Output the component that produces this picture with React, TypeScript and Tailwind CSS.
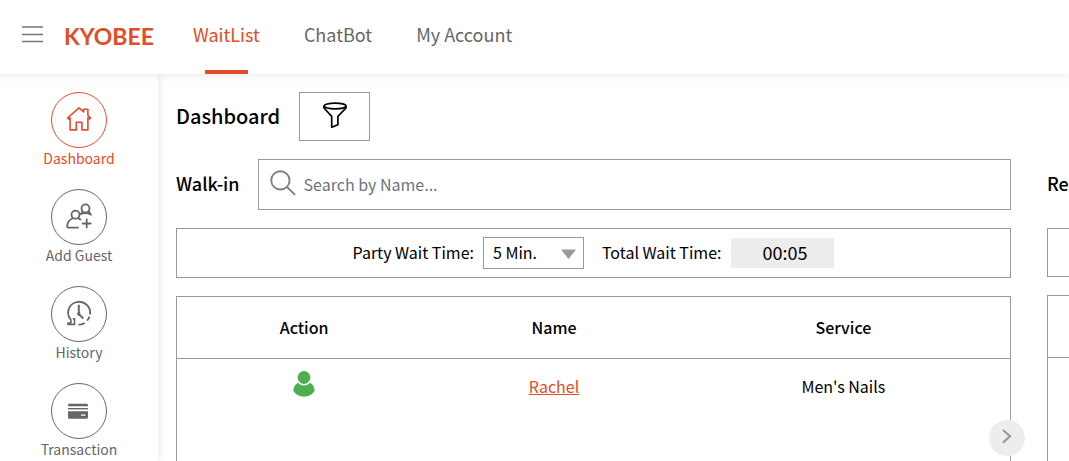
import type { ReactNode } from 'react';

const navLinks = [
  { label: 'WaitList', active: true },
  { label: 'ChatBot', active: false },
  { label: 'My Account', active: false },
];

function HomeIcon() {
  return (
    <svg className="w-7 h-7" viewBox="0 0 28 28" fill="none" stroke="currentColor" strokeWidth="1.6" strokeLinejoin="round" strokeLinecap="round">
      <path d="M2.500 12 14 1.800l4.700 4.100V3.200h4.200v6.300l2.600 2.500-1 1-1.600-1.100v12h-6v-7.600h-5.600v7.600H5.100V11.800L3.500 13z" />
    </svg>
  );
}

function AddGuestIcon() {
  return (
    <svg className="w-7 h-7" viewBox="0 0 28 28" fill="none" stroke="currentColor" strokeWidth="1.8" strokeLinecap="round">
      <circle cx="10.500" cy="11.700" r="4" />
      <path d="M13 24.600H3.200c-.7 0-1-.4-1-1 0-4 1.900-6.600 5.500-8.300M13.300 15.300c.9.300 1.500.7 2.100 1.200" />
      <circle cx="20.500" cy="5.400" r="4" />
      <path d="M17.700 8.400c-.8.500-1.300 1.200-1.700 2.400 2.600-.9 6-1 9.600.5-.4-1.300-1.200-2.300-2.300-2.900" />
      <path d="M21.700 16.500v8M17.700 20.500h8" />
    </svg>
  );
}

function HistoryIcon() {
  return (
    <svg className="w-7 h-7" viewBox="0 0 28 28" fill="none" stroke="currentColor" strokeWidth="1.8">
      <path d="M6 20.200A11 11 0 1 1 25 14.500" />
      <path d="M24.500 16.600a11 11 0 0 1-2.400 4M19.700 22.900a11 11 0 0 1-6.200 1.700" />
      <path d="M7.800 18.700h1.700v5.700H3v-1.300h2.300c.9-.6.900-1.900.4-3" strokeWidth="1.6" />
      <path d="M13.800 4.800v9.300l4.500 4.400" strokeWidth="2" />
      <circle cx="13.800" cy="14" r="1.700" fill="currentColor" stroke="none" />
    </svg>
  );
}

function CardIcon() {
  return (
    <svg className="w-7 h-7" viewBox="0 0 28 28" fill="currentColor">
      <path d="M3 9.300V8.200C3 7.300 3.600 6.700 4.500 6.700h17c.9 0 1.500.6 1.500 1.500v1.100z" />
      <path d="M3 11h20v1.400H3z" />
      <path fillRule="evenodd" d="M3 14.300h20v6c0 .9-.6 1.500-1.500 1.500h-17c-.9 0-1.500-.6-1.500-1.500zM16 17.600h4.500v1.100H16z" />
    </svg>
  );
}

const sidebarItems: { label: string; icon: ReactNode; active?: boolean }[] = [
  { label: 'Dashboard', icon: <HomeIcon />, active: true },
  { label: 'Add Guest', icon: <AddGuestIcon /> },
  { label: 'History', icon: <HistoryIcon /> },
  { label: 'Transaction', icon: <CardIcon /> },
];

const guests = [{ name: 'Rachel', service: "Men's Nails" }];

function Header() {
  return (
    <header className="relative z-10 flex h-[74px] shrink-0 items-center bg-white pl-[21px] shadow-[0_2px_8px_rgba(0,0,0,0.08)]">
      <button type="button" aria-label="Menu" className="mr-5 pb-1.5 text-[#777]">
        <svg className="h-5 w-[23px]" viewBox="0 0 23 20" stroke="currentColor" strokeWidth="1.6">
          <path d="M1 3h21M1 10.500h21M1 17.500h21" />
        </svg>
      </button>
      <a href="#" className="w-[129px] pb-0.5 font-['Lato'] text-[23px] leading-6 font-bold text-[#e44b28]">
        KYOBEE
      </a>
      <nav className="flex h-full gap-11 text-lg">
        {navLinks.map((link) => (
          <a
            key={link.label}
            href="#"
            className={`relative flex items-center pb-1.5 ${link.active ? 'text-[#e44b28]' : 'text-[#666]'}`}
          >
            {link.label}
            {link.active && <span className="absolute inset-x-3 bottom-0 h-1 bg-[#e44b28]" />}
          </a>
        ))}
      </nav>
    </header>
  );
}

function Sidebar() {
  return (
    <aside className="flex w-[158px] shrink-0 flex-col items-center gap-[21px] overflow-hidden pt-[18px] shadow-[2px_0_8px_rgba(0,0,0,0.08)]">
      {sidebarItems.map((item) => (
        <a
          key={item.label}
          href="#"
          className={`flex shrink-0 flex-col items-center ${item.active ? 'text-[#e44b28]' : 'text-[#666]'}`}
        >
          <span className="flex size-14 items-center justify-center rounded-full border border-current">
            {item.icon}
          </span>
          <span className="text-sm leading-5">{item.label}</span>
        </a>
      ))}
    </aside>
  );
}

function WalkIn() {
  return (
    <section className="flex w-[calc(100%-58px)] shrink-0 flex-col gap-[18px]">
      <div className="flex items-center gap-[18px]">
        <h2 className="pb-1 text-lg font-medium">Walk-in</h2>
        <label className="flex h-[51px] grow items-center gap-2 border border-[#999] pl-[11px]">
          <svg className="mb-1 size-[26px] text-[#808080]" viewBox="0 0 27 27" fill="none" stroke="currentColor" strokeWidth="2">
            <circle cx="10.800" cy="10.800" r="9.500" />
            <path d="m17.600 17.600 8.400 8.200" />
          </svg>
          <input
            type="text"
            aria-label="Search by Name"
            placeholder="Search by Name..."
            className="min-w-0 grow pb-0.5 text-base outline-none placeholder:text-[#6c757d]"
          />
        </label>
      </div>

      <div className="flex h-[50px] items-center justify-center border border-[#999]">
        <label htmlFor="party-wait" className="mr-[9px] pb-0.5">Party Wait Time:</label>
        <div className="relative mr-[18px]">
          <select id="party-wait" className="h-8 w-[101px] appearance-none border border-[#999] pb-0.5 pl-[9px]">
            <option>5 Min.</option>
          </select>
          <svg className="pointer-events-none absolute top-3 right-2 h-[10px] w-[15px]" viewBox="0 0 15 10" fill="#999">
            <path d="M0 .5h15L7.500 10z" />
          </svg>
        </div>
        <span className="mr-[10px] pb-0.5">Total Wait Time:</span>
        <output className="h-[30px] w-[103px] bg-[#ededed] pl-1 text-center text-lg leading-7">00:05</output>
      </div>

      <div className="grow border border-b-0 border-[#999]">
        <table className="w-full table-fixed text-center">
          <thead>
            <tr className="h-[61px] border-b border-[#999]">
              <th className="w-[31%] pr-1 font-medium">Action</th>
              <th className="w-[29%] pr-1 font-medium">Name</th>
              <th className="w-[40%] font-medium">Service</th>
            </tr>
          </thead>
          <tbody>
            {guests.map((guest) => (
              <tr key={guest.name} className="h-14">
                <td className="pr-1">
                  <button type="button" aria-label="Guest status" className="block mx-auto pb-1">
                    <svg className="h-[26px] w-[22px]" viewBox="0 0 22 26" fill="#4caf50">
                      <circle cx="11" cy="6.500" r="6.400" />
                      <path d="M4.900 11.800c3.200 3.600 9 3.600 12.200 0 2.600 1.500 4.200 4.200 4.600 7.700C19.600 23.500 15.600 25.600 11 25.600S2.400 23.500.3 19.500c.4-3.500 2-6.200 4.600-7.700z" />
                    </svg>
                  </button>
                </td>
                <td className="pr-1">
                  <a href="#" className="text-[#e44b28] underline">{guest.name}</a>
                </td>
                <td>{guest.service}</td>
              </tr>
            ))}
          </tbody>
        </table>
      </div>
    </section>
  );
}

function Reservation() {
  return (
    <section className="flex w-[calc(100%-58px)] shrink-0 flex-col gap-[18px]">
      <div className="flex h-[51px] items-center">
        <h2 className="pb-1 text-lg font-medium">Reservation</h2>
      </div>
      <div className="h-[49px] border border-[#999]" />
      <div className="grow border border-b-0 border-[#999]">
        <div className="h-[62px] border-b border-[#999]" />
      </div>
    </section>
  );
}

export default function App() {
  return (
    <div className="flex h-screen flex-col overflow-hidden bg-white font-['Noto_Sans_CJK_KR','Noto_Sans_CJK_SC',sans-serif] text-base text-black">
      <Header />
      <div className="flex min-h-0 grow">
        <Sidebar />
        <main className="relative flex min-w-0 grow flex-col gap-[18px] overflow-hidden pt-[18px] pl-[18px]">
          <div className="flex items-center gap-[19px]">
            <h1 className="pb-0.5 text-xl font-medium">Dashboard</h1>
            <button type="button" aria-label="Filter" className="flex h-[49px] w-[71px] items-center justify-center border border-[#999] pb-1">
              <svg className="h-[26px] w-6" viewBox="0 0 24 26" fill="none" stroke="currentColor" strokeWidth="1.7" strokeLinejoin="round">
                <ellipse cx="12" cy="4" rx="11" ry="2.900" />
                <path d="M1 4v2l7.700 8.400v10.800l6.200-2.400v-8.400L23 6V4" />
              </svg>
            </button>
          </div>
          <div className="flex grow gap-9">
            <WalkIn />
            <Reservation />
          </div>
          <button
            type="button"
            aria-label="Next"
            className="absolute right-11 bottom-[5px] flex size-9 items-center justify-center rounded-full bg-[#ededed] pb-1 text-[#999]"
          >
            <svg className="h-4 w-3" viewBox="0 0 12 16" fill="none" stroke="currentColor" strokeWidth="2.200">
              <path d="m2 2 7 6.300L2 14.600" />
            </svg>
          </button>
        </main>
      </div>
    </div>
  );
}
